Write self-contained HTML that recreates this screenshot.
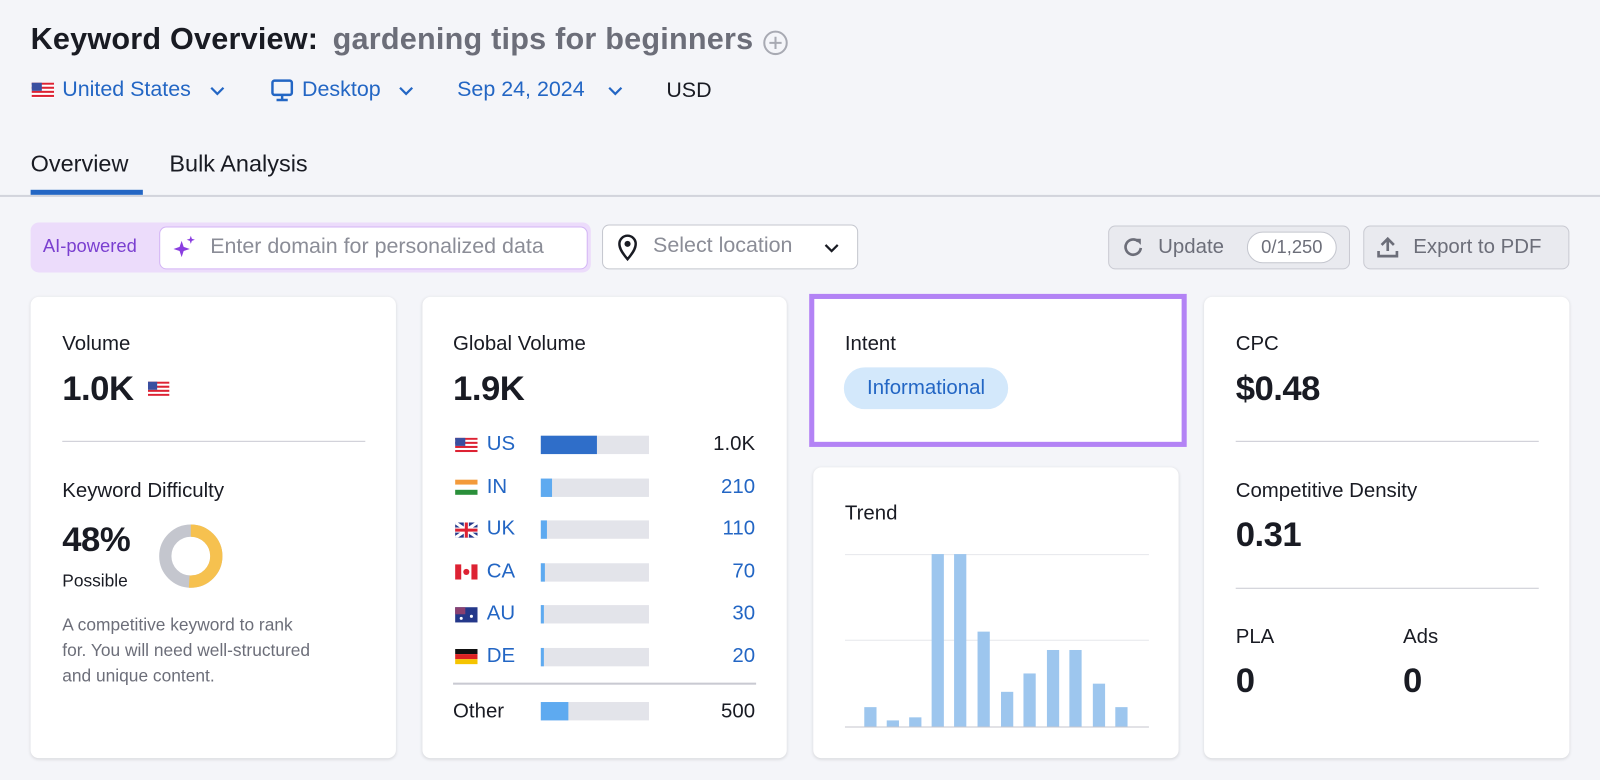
<!DOCTYPE html>
<html><head><meta charset="utf-8"><style>
*{box-sizing:border-box;margin:0;padding:0}
body{width:1600px;height:779px;background:#f4f5f9;font-family:"Liberation Sans",sans-serif;color:#191b23;position:relative;overflow:hidden}
#w{position:absolute;left:0;top:0;width:1568px;height:764px;transform:scale(1.0204);transform-origin:0 0}
.a{position:absolute;white-space:nowrap}
.blue{color:#2366c4}
.card{position:absolute;background:#fff;border-radius:8px;box-shadow:0 1px 3px rgba(0,0,0,.12)}
.lbl{font-size:20px}
.big{font-size:34px;font-weight:bold;letter-spacing:-0.5px}
.btn{position:absolute;background:#e9eaef;border:1px solid #c9cad2;border-radius:7px;color:#6c6e79;font-size:20px}
.bar{position:absolute;left:530px;width:106px;height:18px;background:#e3e4ea}
.bar i{position:absolute;left:0;top:0;bottom:0;background:#5eaaf0}
.flag{position:absolute;width:22px;height:15px}
</style></head><body><div id="w">
<div class="a" style="left:30px;top:22px;font-size:30px;font-weight:bold;letter-spacing:0.2px">Keyword Overview:</div>
<div class="a" style="left:326px;top:22px;font-size:30px;font-weight:bold;color:#6c6e79;letter-spacing:0.2px">gardening tips for beginners</div>
<svg class="a" style="left:747px;top:29px" width="26" height="26" viewBox="0 0 26 26"><circle cx="13" cy="13" r="11" fill="none" stroke="#a8aab3" stroke-width="2"/><path d="M13 7v12M7 13h12" stroke="#a8aab3" stroke-width="2"/></svg>

<svg class="a" style="left:31px;top:81px" width="22" height="15"><rect width="22" height="15" fill="#fff"/><g fill="#d23"><rect y="0" width="22" height="2"/><rect y="4" width="22" height="2"/><rect y="8" width="22" height="2"/><rect y="12" width="22" height="2"/></g><rect width="10" height="8" fill="#3a4fa0"/></svg>
<div class="a blue" style="left:61px;top:76px;font-size:21px">United States</div>
<svg class="a" style="left:205px;top:83px" width="16" height="12"><path d="M2 3l6 6 6-6" stroke="#2366c4" stroke-width="2.2" fill="none"/></svg>
<svg class="a" style="left:265px;top:77px" width="24" height="24"><rect x="2" y="2" width="19" height="14" rx="2" fill="none" stroke="#2366c4" stroke-width="2.4"/><path d="M11.5 16v4M6 21h11" stroke="#2366c4" stroke-width="2.4"/></svg>
<div class="a blue" style="left:296px;top:76px;font-size:21px">Desktop</div>
<svg class="a" style="left:390px;top:83px" width="16" height="12"><path d="M2 3l6 6 6-6" stroke="#2366c4" stroke-width="2.2" fill="none"/></svg>
<div class="a blue" style="left:448px;top:76px;font-size:21px">Sep 24, 2024</div>
<svg class="a" style="left:595px;top:83px" width="16" height="12"><path d="M2 3l6 6 6-6" stroke="#2366c4" stroke-width="2.2" fill="none"/></svg>
<div class="a" style="left:653px;top:77px;font-size:21px">USD</div>

<div class="a" style="left:30px;top:147px;font-size:23px">Overview</div>
<div class="a" style="left:166px;top:147px;font-size:23px">Bulk Analysis</div>
<div class="a" style="left:30px;top:186px;width:110px;height:5px;background:#2366c4"></div>
<div class="a" style="left:0;top:191px;width:1600px;height:2px;background:#d2d4dc"></div>

<div class="a" style="left:30px;top:218px;width:549px;height:49px;background:#ecdcfb;border-radius:8px"></div>
<div class="a" style="left:42px;top:231px;font-size:18px;color:#7a3fd0">AI-powered</div>
<div class="a" style="left:156px;top:222px;width:420px;height:42px;background:#fff;border:1px solid #d3b5f5;border-radius:7px"></div>
<svg class="a" style="left:168px;top:230px" width="26" height="26" viewBox="0 0 26 26"><path d="M10 6l2 6 6 2-6 2-2 6-2-6-6-2 6-2z" fill="#8a3ee0"/><path d="M19 1l1 3 3 1-3 1-1 3-1-3-3-1 3-1z" fill="#8a3ee0"/></svg>
<div class="a" style="left:206px;top:230px;font-size:21px;color:#8b8d97">Enter domain for personalized data</div>
<div class="a" style="left:590px;top:220px;width:251px;height:44px;background:#fff;border:1px solid #c4c6ce;border-radius:7px"></div>
<svg class="a" style="left:603px;top:229px" width="24" height="28" viewBox="0 0 24 28"><path d="M12 25C6 18 4 14 4 10a8 8 0 0 1 16 0c0 4-2 8-8 15z" fill="none" stroke="#191b23" stroke-width="2.4"/><circle cx="12" cy="10" r="3" fill="#191b23"/></svg>
<div class="a" style="left:640px;top:229px;font-size:21px;color:#8b8d97">Select location</div>
<svg class="a" style="left:807px;top:237px" width="16" height="12"><path d="M2 3l6 6 6-6" stroke="#191b23" stroke-width="2.2" fill="none"/></svg>

<div class="btn" style="left:1086px;top:221px;width:237px;height:43px"></div>
<svg class="a" style="left:1099px;top:230px" width="24" height="24" viewBox="0 0 24 24"><path d="M19 13a7.5 7.5 0 1 1-2.5-6.5" fill="none" stroke="#6c6e79" stroke-width="2.6"/><path d="M13 4h6v6z" fill="#6c6e79"/></svg>
<div class="a" style="left:1135px;top:231px;font-size:20px;color:#6c6e79">Update</div>
<div class="a" style="left:1222px;top:227px;width:88px;height:31px;background:#fff;border:1px solid #c4c6ce;border-radius:16px;font-size:18px;color:#6c6e79;text-align:center;line-height:29px">0/1,250</div>
<div class="btn" style="left:1336px;top:221px;width:202px;height:43px"></div>
<svg class="a" style="left:1348px;top:230px" width="24" height="24" viewBox="0 0 24 24"><path d="M12 16V4M6 10l6-6 6 6M3 16v5h18v-5" fill="none" stroke="#6c6e79" stroke-width="2.6"/></svg>
<div class="a" style="left:1385px;top:231px;font-size:20px;color:#6c6e79">Export to PDF</div>

<!-- card 1 -->
<div class="card" style="left:30px;top:291px;width:358px;height:452px"></div>
<div class="a lbl" style="left:61px;top:326px">Volume</div>
<div class="a big" style="left:61px;top:362px">1.0K</div>
<svg class="a" style="left:145px;top:374px" width="21" height="14"><rect width="21" height="14" fill="#fff"/><g fill="#d23"><rect width="21" height="2"/><rect y="4" width="21" height="2"/><rect y="8" width="21" height="2"/><rect y="12" width="21" height="2"/></g><rect width="9" height="8" fill="#3a4fa0"/></svg>
<div class="a" style="left:61px;top:432px;width:297px;height:1px;background:#c9cad2"></div>
<div class="a lbl" style="left:61px;top:470px">Keyword Difficulty</div>
<div class="a big" style="left:61px;top:510px">48%</div>
<div class="a" style="left:61px;top:560px;font-size:17px">Possible</div>
<svg class="a" style="left:155px;top:513px" width="64" height="64" viewBox="0 0 64 64"><circle cx="32" cy="32" r="25" fill="none" stroke="#c4c6ce" stroke-width="12"/><circle cx="32" cy="32" r="25" fill="none" stroke="#f6c14f" stroke-width="12" stroke-dasharray="80 157" transform="rotate(-90 32 32)"/></svg>
<div class="a" style="left:61px;top:600px;font-size:17px;color:#6c6e79;line-height:25px;white-space:normal;width:248px">A competitive keyword to rank for. You will need well-structured and unique content.</div>

<!-- card 2 -->
<div class="card" style="left:414px;top:291px;width:357px;height:452px"></div>
<div class="a lbl" style="left:444px;top:326px">Global Volume</div>
<div class="a big" style="left:444px;top:362px">1.9K</div>

<svg class="flag" style="left:446px;top:429px"><rect width="22" height="15" fill="#fff"/><g fill="#d23"><rect width="22" height="2"/><rect y="4" width="22" height="2"/><rect y="8" width="22" height="2"/><rect y="12" width="22" height="2"/></g><rect width="10" height="8" fill="#3a4fa0"/></svg>
<div class="a blue" style="left:477px;top:424px;font-size:20px">US</div>
<div class="bar" style="top:427px"><i style="width:55px;background:#2f6ec9"></i></div>
<div class="a" style="left:680px;top:424px;font-size:20px;width:60px;text-align:right">1.0K</div>

<svg class="flag" style="left:446px;top:470px"><rect width="22" height="5" fill="#f39a3a"/><rect y="5" width="22" height="5" fill="#fff"/><rect y="10" width="22" height="5" fill="#2a8f3a"/></svg>
<div class="a blue" style="left:477px;top:466px;font-size:20px">IN</div>
<div class="bar" style="top:469px"><i style="width:11px"></i></div>
<div class="a blue" style="left:680px;top:466px;font-size:20px;width:60px;text-align:right">210</div>

<svg class="flag" style="left:446px;top:512px"><rect width="22" height="15" fill="#24388a"/><path d="M0 0L22 15M22 0L0 15" stroke="#fff" stroke-width="3"/><path d="M11 0v15M0 7.5h22" stroke="#fff" stroke-width="5"/><path d="M11 0v15M0 7.5h22" stroke="#d23" stroke-width="3"/></svg>
<div class="a blue" style="left:477px;top:507px;font-size:20px">UK</div>
<div class="bar" style="top:510px"><i style="width:6px"></i></div>
<div class="a blue" style="left:680px;top:507px;font-size:20px;width:60px;text-align:right">110</div>

<svg class="flag" style="left:446px;top:553px"><rect width="22" height="15" fill="#fff"/><rect width="6" height="15" fill="#d23"/><rect x="16" width="6" height="15" fill="#d23"/><circle cx="11" cy="7.5" r="3" fill="#d23"/></svg>
<div class="a blue" style="left:477px;top:549px;font-size:20px">CA</div>
<div class="bar" style="top:552px"><i style="width:4px"></i></div>
<div class="a blue" style="left:680px;top:549px;font-size:20px;width:60px;text-align:right">70</div>

<svg class="flag" style="left:446px;top:595px"><rect width="22" height="15" fill="#24388a"/><rect width="10" height="7" fill="#8a4070"/><circle cx="16" cy="9" r="1.5" fill="#fff"/><circle cx="6" cy="11" r="1.5" fill="#fff"/></svg>
<div class="a blue" style="left:477px;top:590px;font-size:20px">AU</div>
<div class="bar" style="top:593px"><i style="width:3px"></i></div>
<div class="a blue" style="left:680px;top:590px;font-size:20px;width:60px;text-align:right">30</div>

<svg class="flag" style="left:446px;top:636px"><rect width="22" height="5" fill="#111"/><rect y="5" width="22" height="5" fill="#d22"/><rect y="10" width="22" height="5" fill="#f5c400"/></svg>
<div class="a blue" style="left:477px;top:632px;font-size:20px">DE</div>
<div class="bar" style="top:635px"><i style="width:3px"></i></div>
<div class="a blue" style="left:680px;top:632px;font-size:20px;width:60px;text-align:right">20</div>

<div class="a" style="left:444px;top:669px;width:297px;height:2px;background:#c9cad2"></div>
<div class="a" style="left:444px;top:686px;font-size:20px">Other</div>
<div class="bar" style="top:688px"><i style="width:27px"></i></div>
<div class="a" style="left:680px;top:686px;font-size:20px;width:60px;text-align:right">500</div>

<!-- intent -->
<div class="a" style="left:793px;top:288px;width:370px;height:150px;background:#fff;border:5px solid #b383f5"></div>
<div class="a lbl" style="left:828px;top:326px">Intent</div>
<div class="a" style="left:827px;top:360px;width:161px;height:41px;background:#d3e8fb;border-radius:21px;font-size:20px;color:#2366c4;text-align:center;line-height:41px">Informational</div>

<!-- trend -->
<div class="card" style="left:797px;top:458px;width:358px;height:285px"></div>
<div class="a lbl" style="left:828px;top:492px">Trend</div>
<svg class="a" style="left:828px;top:540px" width="298" height="176">
<g stroke="#e6e7ec" stroke-width="1"><line x1="0" y1="3.5" x2="298" y2="3.5"/><line x1="0" y1="87.5" x2="298" y2="87.5"/></g>
<line x1="0" y1="172.5" x2="298" y2="172.5" stroke="#c4c6ce"/>
<g fill="#9dc6ee">
<rect x="19" y="153" width="12" height="19"/>
<rect x="41" y="166" width="12" height="6"/>
<rect x="63" y="163" width="12" height="9"/>
<rect x="85" y="3" width="12" height="169"/>
<rect x="107" y="3" width="12" height="169"/>
<rect x="130" y="79" width="12" height="93"/>
<rect x="153" y="138" width="12" height="34"/>
<rect x="175" y="120" width="12" height="52"/>
<rect x="198" y="97" width="12" height="75"/>
<rect x="220" y="97" width="12" height="75"/>
<rect x="243" y="130" width="12" height="42"/>
<rect x="265" y="153" width="12" height="19"/>
</g></svg>

<!-- card 4 -->
<div class="card" style="left:1180px;top:291px;width:358px;height:452px"></div>
<div class="a lbl" style="left:1211px;top:326px">CPC</div>
<div class="a big" style="left:1211px;top:362px">$0.48</div>
<div class="a" style="left:1211px;top:432px;width:297px;height:1px;background:#c9cad2"></div>
<div class="a lbl" style="left:1211px;top:470px">Competitive Density</div>
<div class="a big" style="left:1211px;top:505px">0.31</div>
<div class="a" style="left:1211px;top:576px;width:297px;height:1px;background:#c9cad2"></div>
<div class="a lbl" style="left:1211px;top:613px">PLA</div>
<div class="a big" style="left:1211px;top:648px">0</div>
<div class="a lbl" style="left:1375px;top:613px">Ads</div>
<div class="a big" style="left:1375px;top:648px">0</div>
</div></body></html>
